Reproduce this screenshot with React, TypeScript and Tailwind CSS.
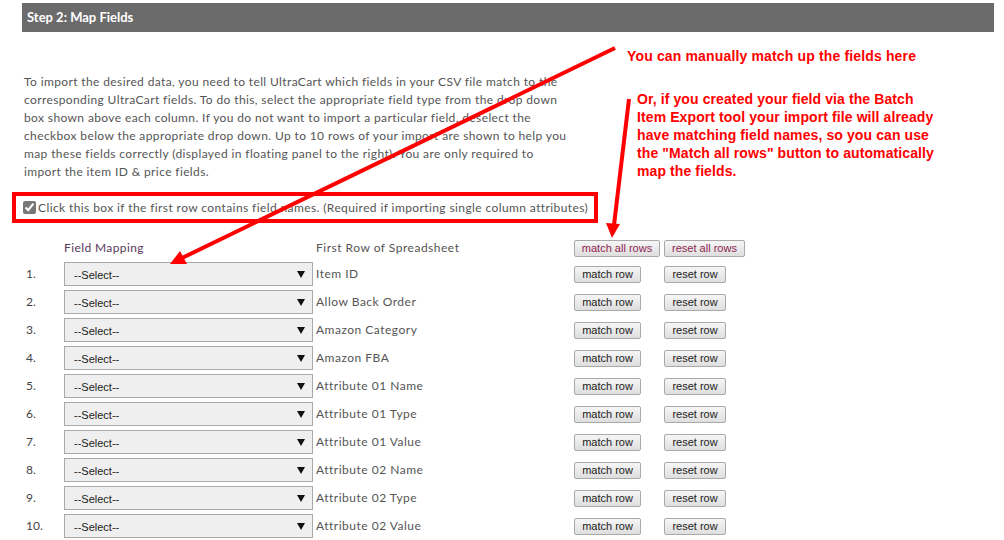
const rows = [
  "Item ID",
  "Allow Back Order",
  "Amazon Category",
  "Amazon FBA",
  "Attribute 01 Name",
  "Attribute 01 Type",
  "Attribute 01 Value",
  "Attribute 02 Name",
  "Attribute 02 Type",
  "Attribute 02 Value",
];

// grey browser-style push button
function Btn({ label, w, accent }: { label: string; w: string; accent?: boolean }) {
  return (
    <button
      className={`${w} h-[17px] rounded-[2px] border border-[#a9a9a9] bg-gradient-to-b from-[#f6f6f6] to-[#dedede] text-[11px] leading-none font-['Liberation_Sans',Arial,sans-serif] ${
        accent ? "text-[#8e1f52]" : "text-[#222]"
      }`}
    >
      {label}
    </button>
  );
}

function FakeSelect() {
  return (
    <div className="flex h-[24px] w-[249px] items-center justify-between border border-[#a9a9a9] bg-[#efefef] pl-[9px] pr-[7px]">
      <span className="pt-[2px] font-['Liberation_Sans',Arial,sans-serif] text-[11px] text-[#222]">--Select--</span>
      <svg width="8" height="7" viewBox="0 0 8 7" aria-hidden>
        <path d="M0 0h8L4 7z" fill="#111" />
      </svg>
    </div>
  );
}

export default function App() {
  return (
    <div className="relative h-[540px] w-[1004px] overflow-hidden bg-white font-['Lato',sans-serif] text-[12px] text-[#555]">
      <div className="ml-[22px] mt-[3px] flex h-[29px] w-[972px] items-center bg-[#6b6b6b] pl-[5px]">
        <span className="text-[13px] font-bold text-white">Step 2: Map Fields</span>
      </div>

      <p className="ml-[24px] mt-[41px] w-[600px] leading-[18px] tracking-[0.38px]">
        To import the desired data, you need to tell UltraCart which fields in your CSV file match to the
        <br />
        corresponding UltraCart fields. To do this, select the appropriate field type from the drop down
        <br />
        box shown above each column. If you do not want to import a particular field, deselect the
        <br />
        checkbox below the appropriate drop down. Up to 10 rows of your import are shown to help you
        <br />
        map these fields correctly (displayed in floating panel to the right). You are only required to
        <br />
        import the item ID &amp; price fields.
      </p>

      {/* highlighted checkbox line */}
      <div className="ml-[12px] mt-[11px] flex h-[31px] w-[586px] items-center border-[4px] border-[#ff0000] pl-[7px]">
        <input type="checkbox" defaultChecked className="m-0 h-[13px] w-[13px] accent-[#777]" />
        <span className="ml-[2px] whitespace-nowrap tracking-[0.4px] text-[#555]">
          Click this box if the first row contains field names. (Required if importing single column attributes)
        </span>
      </div>

      <div className="mt-[13px]">
        <div className="flex h-[24px] items-center">
          <span className="ml-[64px] w-[252px] tracking-[0.4px] text-[#5b3a5b]">Field Mapping</span>
          <span className="w-[258px] tracking-[0.5px] text-[#555]">First Row of Spreadsheet</span>
          <Btn label="match all rows" w="w-[86px]" accent />
          <span className="ml-[4px]">
            <Btn label="reset all rows" w="w-[81px]" accent />
          </span>
        </div>
        {rows.map((r, i) => (
          <div key={r} className="flex h-[28px] items-center">
            <span className="ml-[26px] w-[38px] text-[#444]">{i + 1}.</span>
            <FakeSelect />
            <span className="ml-[3px] w-[258px] tracking-[0.5px] text-[#555]">{r}</span>
            <Btn label="match row" w="w-[67px]" />
            <span className="ml-[23px]">
              <Btn label="reset row" w="w-[62px]" />
            </span>
          </div>
        ))}
      </div>

      {/* annotation callouts drawn over the screenshot */}
      <div className="absolute left-[627px] top-[46px] font-['Liberation_Sans',Arial,sans-serif] text-[14px] font-bold tracking-[0.15px] text-[#ff0000]">
        You can manually match up the fields here
      </div>
      <div className="absolute left-[637px] top-[90px] w-[360px] font-['Liberation_Sans',Arial,sans-serif] text-[14px] font-bold leading-[18px] tracking-[0.1px] text-[#ff0000]">
        Or, if you created your field via the Batch
        <br />
        Item Export tool your import file will already
        <br />
        have matching field names, so you can use
        <br />
        the "Match all rows" button to automatically
        <br />
        map the fields.
      </div>
      <svg className="pointer-events-none absolute left-0 top-0" width="1004" height="540" aria-hidden>
        <line x1="615" y1="48" x2="182" y2="258" stroke="#ff0000" strokeWidth="4" />
        <path d="M170 264 L180 251 L187 264 Z" fill="#ff0000" />
        <line x1="629" y1="99" x2="614" y2="225" stroke="#ff0000" strokeWidth="4" />
        <path d="M612 238 L606 223 L620 224 Z" fill="#ff0000" />
      </svg>
    </div>
  );
}
